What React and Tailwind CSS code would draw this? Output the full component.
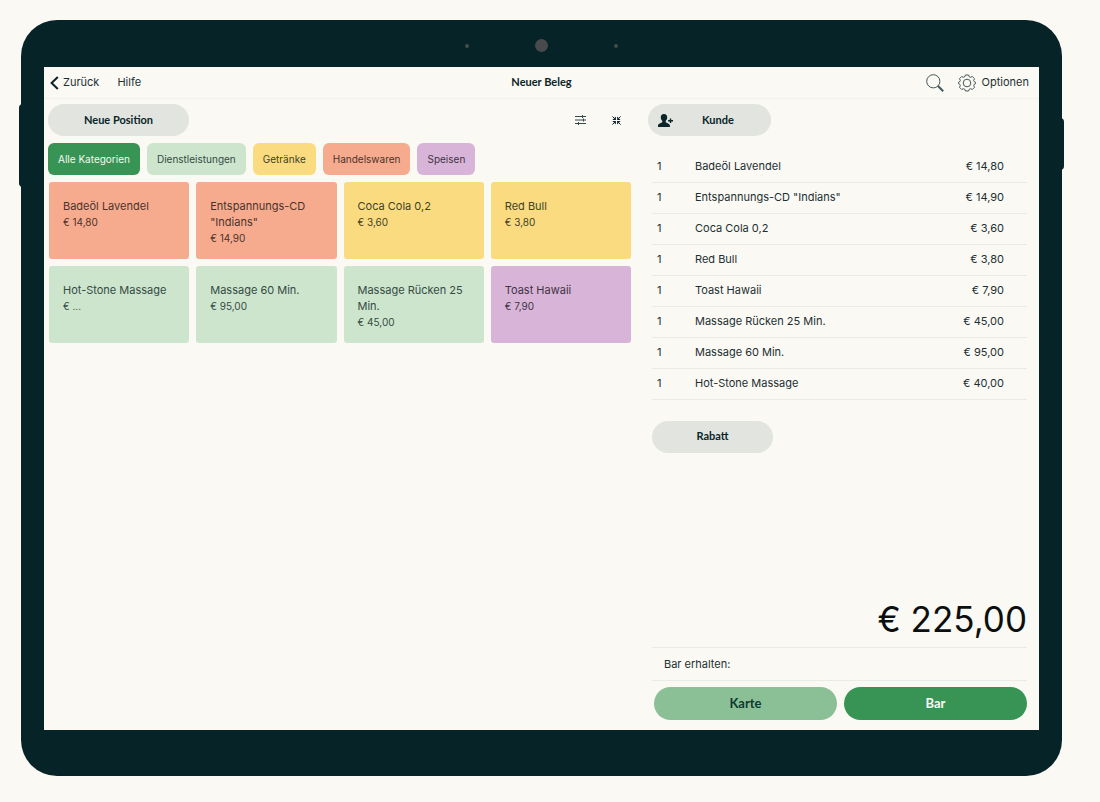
import React, { useState } from 'react';

const categories = [
  { name: 'Alle Kategorien', color: 'bg-[#389454] text-[#f4f8f0]' },
  { name: 'Dienstleistungen', color: 'bg-[#cee5cd] text-[#334b44]' },
  { name: 'Getränke', color: 'bg-[#fadb80] text-[#3f4228]' },
  { name: 'Handelswaren', color: 'bg-[#f7ab8e] text-[#4a332c]' },
  { name: 'Speisen', color: 'bg-[#d8b5d8] text-[#3f3344]' },
];

const products = [
  { name: 'Badeöl Lavendel', price: '14,80', category: 'Handelswaren' },
  { name: 'Entspannungs-CD "Indians"', price: '14,90', category: 'Handelswaren' },
  { name: 'Coca Cola 0,2', price: '3,60', category: 'Getränke' },
  { name: 'Red Bull', price: '3,80', category: 'Getränke' },
  { name: 'Hot-Stone Massage', price: '...', category: 'Dienstleistungen' },
  { name: 'Massage 60 Min.', price: '95,00', category: 'Dienstleistungen' },
  { name: 'Massage Rücken 25 Min.', price: '45,00', category: 'Dienstleistungen' },
  { name: 'Toast Hawaii', price: '7,90', category: 'Speisen' },
];

const positions = [
  { name: 'Badeöl Lavendel', price: '14,80' },
  { name: 'Entspannungs-CD "Indians"', price: '14,90' },
  { name: 'Coca Cola 0,2', price: '3,60' },
  { name: 'Red Bull', price: '3,80' },
  { name: 'Toast Hawaii', price: '7,90' },
  { name: 'Massage Rücken 25 Min.', price: '45,00' },
  { name: 'Massage 60 Min.', price: '95,00' },
  { name: 'Hot-Stone Massage', price: '40,00' },
];

const BackIcon = () => (
  <svg width="9" height="14" viewBox="0 0 9 14" fill="none" stroke="#0a2428" strokeWidth="2">
    <path d="M7.8 1 1.6 7l6.2 6" />
  </svg>
);

const SearchIcon = () => (
  <svg width="18" height="18" viewBox="0 0 18 18" fill="none" stroke="#44575a">
    <circle cx="7.3" cy="7.3" r="6.6" strokeWidth="1" />
    <path d="m12 12 5.2 5.2" strokeWidth="2" />
  </svg>
);

const GearIcon = () => (
  <svg width="18" height="18" viewBox="0 0 18 18" fill="none" stroke="#44575a" strokeLinejoin="round">
    <circle cx="9" cy="9" r="3.8" />
    <path d="M7.4 1h3.2l.6 1.7 1.4.6 1.7-.8 2.2 2.2-.8 1.7.6 1.4 1.2.5v1.4l-1.2.5-.6 1.4.8 1.7-2.2 2.2-1.7-.8-1.4.6-.6 1.7H7.4l-.6-1.7-1.4-.6-1.7.8-2.2-2.2.8-1.7-.6-1.4L.5 9.7V8.3l1.2-.5.6-1.4-.8-1.7 2.2-2.2 1.7.8 1.4-.6z" />
  </svg>
);

const ListIcon = () => (
  <svg width="11" height="10" viewBox="0 0 11 10" fill="none" stroke="#33494a">
    <path d="M0 1.5h11M0 5h11M0 8.5h11" />
    <path d="M7.5 0v3M8.5 3.5v3M3.5 7v3" />
  </svg>
);

const CollapseIcon = () => (
  <svg width="9" height="9" viewBox="0 0 9 9" fill="#0a2428" stroke="#0a2428">
    <path d="M.4.4 2.5 2.5M8.6.4 6.5 2.5M.4 8.6 2.5 6.5M8.6 8.6 6.5 6.5" />
    <path
      d="M3.9.4v3.500H.4zM5.100.4v3.500h3.500zM3.900 8.600V5.100H.4zM5.100 8.600V5.100h3.500z"
      stroke="none"
    />
  </svg>
);

const AddUserIcon = () => (
  <svg width="15" height="13" viewBox="0 0 15 13" fill="#0a2428">
    <path d="M6 0c2.1 0 3.3 1.5 3.2 3.4 0 1.5-.7 2.7-1.5 3.4v1.4c.8.8 3.9 1.2 4.2 3V13H0v-1.8c.3-1.8 3.5-2.2 4.3-3V6.8C3.5 6.1 2.8 4.9 2.8 3.4 2.7 1.5 3.9 0 6 0z" />
    <path d="M11.8 4.5h1.4V6H15v1.4h-1.8V9h-1.4V7.4h-1.7V6h1.7z" />
  </svg>
);

const App = () => {
  const [active, setActive] = useState('Alle Kategorien');
  const [received, setReceived] = useState('');

  const visible =
    active === 'Alle Kategorien'
      ? products
      : products.filter(p => p.category === active);

  return (
    <div className="min-h-screen flex flex-col bg-[#fbf9f3] pt-5 pb-[26px] pl-[21px] pr-[38px] font-['Inter',sans-serif] text-[#1c3033]">
      {/* Tablet */}
      <div className="relative flex-1 flex flex-col rounded-[36px] bg-[#062428] px-[23px] pb-[46px]">
        <span className="absolute -left-0.5 top-[84px] h-[83px] w-1 rounded-l-sm bg-[#062428]" />
        <span className="absolute -right-0.5 top-[98px] h-[52px] w-1 rounded-r-sm bg-[#062428]" />

        {/* Camera */}
        <div className="h-[47px] shrink-0 flex items-center justify-center gap-[66px] pt-1">
          <span className="size-1 rounded-full bg-[#484b4c]" />
          <span className="size-[13px] rounded-full bg-[#484b4c]" />
          <span className="size-1 rounded-full bg-[#484b4c]" />
        </div>

        {/* Screen */}
        <div className="flex-1 flex flex-col bg-[#fbf9f3]">
          <header className="h-8 grid grid-cols-3 items-center border-b border-[#f3f2ec] text-[11px]">
            <nav className="flex items-center gap-[18px] pl-1.5">
              <button type="button" className="flex items-center gap-1">
                <BackIcon />
                Zurück
              </button>
              <button type="button">Hilfe</button>
            </nav>
            <h1 className="text-center font-['Lato',sans-serif] text-[11px] font-bold text-[#0a2428]">
              Neuer Beleg
            </h1>
            <div className="flex items-center justify-end gap-3.5 pr-2.5">
              <button type="button" aria-label="Suche">
                <SearchIcon />
              </button>
              <button type="button" className="flex items-center gap-1.5">
                <GearIcon />
                Optionen
              </button>
            </div>
          </header>

          <main className="flex-1 grid grid-cols-[3fr_2fr]">
            {/* Products */}
            <section className="pt-[5px] pl-1 pr-2.5">
              <div className="flex items-center justify-between">
                <button
                  type="button"
                  className="h-8 w-[141px] rounded-full bg-[#e1e4df] font-['Lato',sans-serif] text-[11px] font-bold text-[#0a2428]"
                >
                  Neue Position
                </button>
                <div className="flex items-center gap-[26px] pr-2.5">
                  <button type="button" aria-label="Liste">
                    <ListIcon />
                  </button>
                  <button type="button" aria-label="Verkleinern">
                    <CollapseIcon />
                  </button>
                </div>
              </div>

              <div className="mt-[7px] flex flex-wrap gap-[7px]">
                {categories.map(c => (
                  <button
                    key={c.name}
                    type="button"
                    onClick={() => setActive(c.name)}
                    className={`h-8 rounded-md px-2.5 text-[10px] ${c.color}`}
                  >
                    {c.name}
                  </button>
                ))}
              </div>

              <div className="mt-[7px] grid grid-cols-4 gap-[7px] pl-px">
                {visible.map(p => (
                  <button
                    key={p.name}
                    type="button"
                    className={`flex h-[77px] flex-col rounded-[3px] px-3.5 pt-4 text-left leading-4 ${
                      categories.find(c => c.name === p.category).color
                    }`}
                  >
                    <span className="text-[11px]">{p.name}</span>
                    <span className="text-[10px]">€ {p.price}</span>
                  </button>
                ))}
              </div>
            </section>

            {/* Receipt */}
            <section className="flex flex-col pt-[5px] pl-[7px] pr-3 pb-2.5">
              <button
                type="button"
                className="flex h-8 w-[123px] items-center rounded-full bg-[#e1e4df] pl-2.5 font-['Lato',sans-serif] text-[11px] font-bold text-[#0a2428]"
              >
                <AddUserIcon />
                <span className="ml-[29px]">Kunde</span>
              </button>

              <div className="mt-[15px] flex flex-1 flex-col pl-1">
                <table className="w-full text-[11px]">
                  <tbody>
                    {positions.map(p => (
                      <tr key={p.name} className="h-[31px] border-b border-[#ebebe5]">
                        <td className="w-[43px] pl-[5px]">1</td>
                        <td>{p.name}</td>
                        <td className="pr-[23px] text-right">€ {p.price}</td>
                      </tr>
                    ))}
                  </tbody>
                </table>

                <button
                  type="button"
                  className="mt-[21px] h-8 w-[121px] rounded-full bg-[#e1e4df] font-['Lato',sans-serif] text-[11px] font-bold text-[#0a2428]"
                >
                  Rabatt
                </button>

                <p className="mt-auto pb-2 text-right text-[35px] leading-10 text-[#0b0f10]">
                  € 225,00
                </p>
                <div className="flex h-[34px] items-center gap-2 border-y border-[#ebebe5] pl-3 text-[11px]">
                  <label htmlFor="received">Bar erhalten:</label>
                  <input
                    id="received"
                    type="text"
                    inputMode="decimal"
                    value={received}
                    onChange={e => setReceived(e.target.value)}
                    className="min-w-0 flex-1 bg-transparent focus:outline-none"
                  />
                </div>
                <div className="mt-1.5 grid grid-cols-2 gap-[7px] pl-0.5 font-['Lato',sans-serif] text-[13px] font-bold">
                  <button type="button" className="h-[33px] rounded-full bg-[#8bc096] text-[#0f3a33]">
                    Karte
                  </button>
                  <button type="button" className="h-[33px] rounded-full bg-[#389454] text-[#fbf9f3]">
                    Bar
                  </button>
                </div>
              </div>
            </section>
          </main>
        </div>
      </div>
    </div>
  );
};

export default App;
